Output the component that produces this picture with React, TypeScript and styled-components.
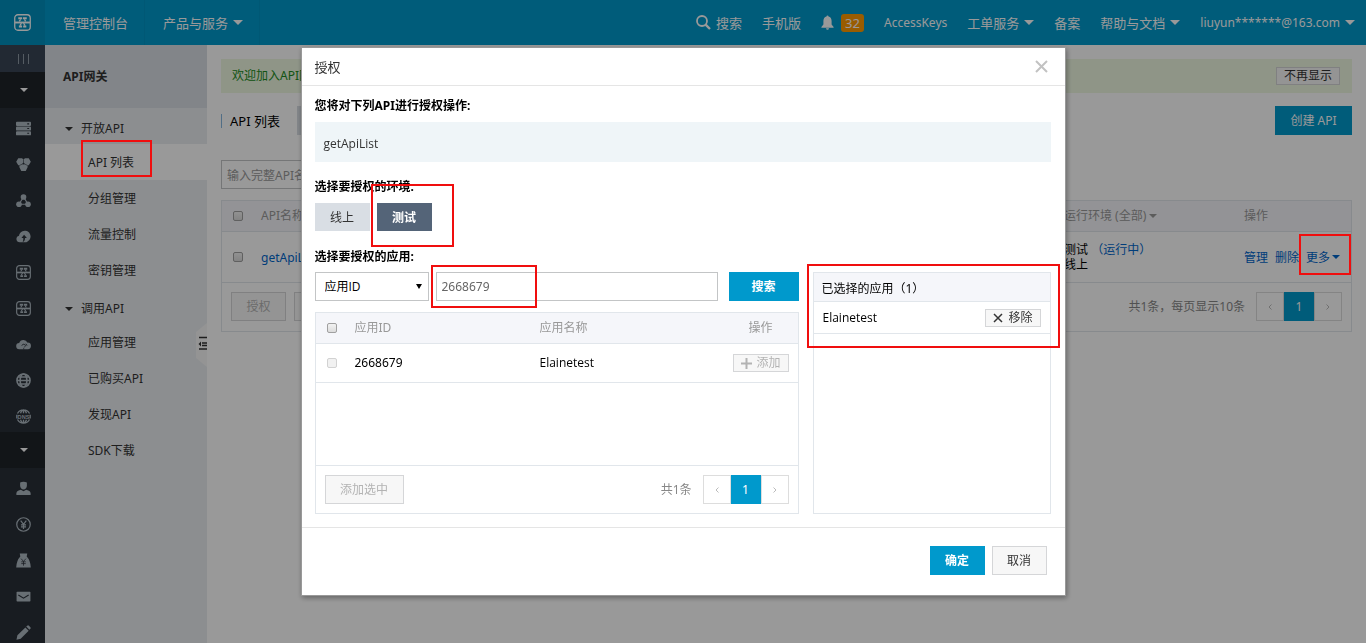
import React from "react";
import styled, { createGlobalStyle, css } from "styled-components";

const Global = createGlobalStyle`
  *, *::before, *::after { box-sizing: border-box; }
  body {
    margin: 0;
    background: #fff;
    color: #333;
    font: 12px/18px "Noto Sans", "Noto Sans CJK SC", sans-serif;
  }
  button, input, select { font: inherit; color: inherit; margin: 0; }
  button { cursor: pointer; padding: 0; }
  a { color: inherit; text-decoration: none; }
  h1, h2, p { margin: 0; font-size: inherit; }
`;

const BLUE = "#0099cc";
const NARROW = `"Open Sans", "Noto Sans CJK SC", sans-serif`;

/* ---------- shared parts ---------- */

const Caret = styled.span<{ $size?: number }>`
  display: inline-block;
  flex: none;
  border: ${(p) => p.$size ?? 4}px solid transparent;
  border-top-color: currentColor;
  border-bottom: 0;
`;

const Mark = styled.span<{ $x: number; $y: number; $w: number; $h: number }>`
  position: absolute;
  z-index: 30;
  left: ${(p) => p.$x}px;
  top: ${(p) => p.$y}px;
  width: ${(p) => p.$w}px;
  height: ${(p) => p.$h}px;
  border: 2px solid #f00e0e;
  pointer-events: none;
`;

const Name = styled.span`
  font-family: ${NARROW};
`;

const Check = styled.input.attrs({ type: "checkbox" })`
  appearance: none;
  display: block;
  width: 10px;
  height: 10px;
  border: 1px solid #a0a0a0;
  border-radius: 2px;
  background: linear-gradient(#f2f2f2, #dcdcdc);
  &:disabled { border-color: #d2d2d2; background: #f1f1f1; }
`;

const Button = styled.button<{ $kind?: "primary" | "plain"; $w?: number; $small?: boolean }>`
  display: inline-flex;
  align-items: center;
  justify-content: center;
  gap: 4px;
  flex: none;
  width: ${(p) => (p.$w ? `${p.$w}px` : "auto")};
  height: ${(p) => (p.$small ? 18 : 29)}px;
  padding: 0 ${(p) => (p.$small ? 7 : 14)}px;
  white-space: nowrap;
  ${(p) =>
    p.$kind === "primary"
      ? css`border: 0; background: ${BLUE}; color: #fff;`
      : css`border: 1px solid #d5d6d8; background: #f7f7f7; color: #333;`}
  &:disabled { color: #b3b3b3; cursor: default; }
`;

const PagerBox = styled.nav`
  display: flex;
  align-items: center;
  gap: 11px;
  color: #888;
`;
const Pages = styled.div`
  display: flex;
  height: 29px;
`;
const PageButton = styled.button<{ $current?: boolean }>`
  display: flex;
  align-items: center;
  justify-content: center;
  width: ${(p) => (p.$current ? 30 : 28)}px;
  border: 1px solid ${(p) => (p.$current ? BLUE : "#ddd")};
  background: ${(p) => (p.$current ? BLUE : "#fff")};
  color: ${(p) => (p.$current ? "#fff" : "#bbb")};
`;

const Chevron = ({ flip }: { flip?: boolean }) => (
  <svg width="4" height="6" viewBox="0 0 4 6" fill="none" stroke="currentColor">
    <path d={flip ? "M.5 .5L3 3L.5 5.5" : "M3.5 .5L1 3L3.5 5.5"} />
  </svg>
);

const Pager = ({ label }: { label: string }) => (
  <PagerBox>
    <span>{label}</span>
    <Pages>
      <PageButton aria-label="上一页"><Chevron /></PageButton>
      <PageButton $current>1</PageButton>
      <PageButton aria-label="下一页"><Chevron flip /></PageButton>
    </Pages>
  </PagerBox>
);

/* ---------- icons ---------- */

const Svg = ({ size = 15, children }: { size?: number; children: React.ReactNode }) => (
  <svg width={size} height={size} viewBox="0 0 16 16" fill="currentColor" aria-hidden="true">
    {children}
  </svg>
);

const ApiIcon = ({ size }: { size?: number }) => (
  <Svg size={size}>
    <g fill="none" stroke="currentColor">
      <rect x=".7" y=".7" width="14.6" height="14.6" rx="3" strokeWidth="1.2" />
      <path d="M4 4h3.600M8.400 4H12M4.600 11.800h3M8.600 11.800h3" strokeWidth="2" />
      <path d="M1 8h14" strokeWidth="1.800" />
      <path d="M6.200 5L5 7M9.800 5L11 7M7 8.600L5.600 11M9 8.600l1.400 2.400" strokeWidth="1.200" />
    </g>
  </Svg>
);
const ServerIcon = () => (
  <Svg>
    <path fillRule="evenodd" d="M1 .8h14a1 1 0 0 1 1 1v2.4a1 1 0 0 1-1 1H1a1 1 0 0 1-1-1V1.800a1 1 0 0 1 1-1zM12 2.400v1.200h2V2.400zM1 5.900h14a1 1 0 0 1 1 1v2.300a1 1 0 0 1-1 1H1a1 1 0 0 1-1-1V6.900a1 1 0 0 1 1-1zM12 7.400v1.200h2V7.400zM1 10.900h14a1 1 0 0 1 1 1v2.400a1 1 0 0 1-1 1H1a1 1 0 0 1-1-1v-2.400a1 1 0 0 1 1-1zM12 12.500v1.200h2v-1.200z" />
  </Svg>
);
const HexIcon = () => (
  <Svg>
    <path d="M2.400 1.200h4L8 2.600l1.600-1.400h4L15.800 5l-2.200 3.700h-1.500l.4 1.900-2.100 4.200H5.600l-2.100-4.200.4-1.900H2.400L.2 5z" />
    <path d="M8 2.600V7M8 7L4 8.800M8 7l4 1.800" fill="none" stroke="#293038" strokeWidth=".6" />
    <circle cx="8" cy="7" r="1" fill="#293038" />
  </Svg>
);
const NodesIcon = () => (
  <Svg>
    <circle cx="8" cy="4.200" r="3" />
    <circle cx="3.200" cy="12" r="3" />
    <circle cx="12.800" cy="12" r="3" />
    <path d="M8 4.200L3.200 12h9.600z" fill="none" stroke="currentColor" strokeWidth="1.200" />
  </Svg>
);
const CloudUpIcon = () => (
  <Svg>
    <path d="M4 14.200a3.600 3.600 0 0 1-.8-7.100A6.200 6.200 0 1 1 12 13.600a5 5 0 0 1-2 .6z" />
    <path d="M8.600 6.200l3 3.400H9.600c0 2.200-.8 3.800-2.600 4.600.7-1.400.9-2.800.8-4.600H5.800z" fill="#293038" />
  </Svg>
);
const CloudIcon = () => (
  <Svg>
    <path d="M3.600 13a3.300 3.300 0 0 1-.2-6.600A4.800 4.800 0 0 1 12.300 6 3.500 3.500 0 0 1 12.600 13z" />
    <path d="M6.200 9.200c.5-1.800 3.300-2 3.800-.2.200 1-.8 1.400-1.200 1.900M10.500 7.200l1.200 2M8.200 12v1.200" fill="none" stroke="#293038" />
  </Svg>
);
const GlobeIcon = () => (
  <Svg>
    <g fill="none" stroke="currentColor" strokeWidth="1.700">
      <circle cx="8" cy="8" r="7" />
      <ellipse cx="8" cy="8" rx="3.600" ry="7" />
      <path d="M1 8h14M2.600 4.200h10.800M2.600 11.800h10.800" />
    </g>
  </Svg>
);
const DnsText = styled.text`
  font: bold 6px "Liberation Sans", sans-serif;
  text-anchor: middle;
`;
const DnsIcon = () => (
  <Svg>
    <path d="M1.600 4.800a7.200 7.200 0 0 1 12.800 0M1.600 11.200a7.200 7.200 0 0 0 12.800 0M4.800 4.500Q5.600 1.600 8 .9q2.400.7 3.200 3.600M4.800 11.500q.8 2.900 3.200 3.600 2.400-.7 3.200-3.600M8 1v3.500M8 11.500V15M.9 6v4M15.100 6v4" fill="none" stroke="currentColor" strokeWidth="1.400" />
    <DnsText x="8" y="10.200">DNS</DnsText>
  </Svg>
);
const UserIcon = () => (
  <Svg>
    <path d="M4.400 1.500Q8 0 11.600 1.500v3.800Q11 9 8 9T4.400 5.300zM.4 15v-2.200q.2-1.800 2.400-2.600l2.400-.8L8 11l2.800-1.600 2.400.8q2.200.8 2.400 2.600V15z" />
  </Svg>
);
const YenIcon = () => (
  <Svg>
    <g fill="none" stroke="currentColor" strokeWidth="1.300">
      <circle cx="8" cy="8" r="7.200" />
      <path d="M5 3.800l3 4 3-4M8 7.800v5M5.300 8.300h5.400M5.300 10.500h5.400" />
    </g>
  </Svg>
);
const BagIcon = () => (
  <Svg>
    <path d="M4 .6h8l-.6 3.200q3.900 4 4.400 11.600H.2Q.7 7.800 4.600 3.800z" />
    <path d="M5.400 6L8 9l2.600-3M8 9v4.500M5.600 9.400h4.800M5.600 11.300h4.800" fill="none" stroke="#293038" strokeWidth=".8" />
  </Svg>
);
const MailIcon = () => (
  <Svg>
    <rect x=".6" y="3" width="14.800" height="10.400" rx=".8" />
    <path d="M2.500 6.500L8 9.800l5.500-3.300" fill="none" stroke="#293038" strokeWidth="1.200" />
  </Svg>
);
const PencilIcon = () => (
  <Svg>
    <path d="M.5 15.600l1-4.600L10 2.600l3.500 3.500L5 14.600zM10.900 1.700L12 .7q.9-.7 1.800.1l1.500 1.500q.8.900 0 1.800l-1 1z" />
  </Svg>
);

/* ---------- top bar ---------- */

const TopBar = styled.header`
  display: flex;
  align-items: stretch;
  height: 45px;
  background: ${BLUE};
  color: #fff;
  font-size: 13px;
`;
const Logo = styled.a`
  display: flex;
  align-items: center;
  justify-content: center;
  width: 45px;
  background: #008fbf;
`;
const NavItem = styled.a<{ $wide?: boolean; $latin?: boolean }>`
  display: flex;
  align-items: center;
  gap: 5px;
  padding: ${(p) => (p.$wide ? "0 16px 0 18px" : "0 10px")};
  font-size: ${(p) => (p.$latin ? 12 : 13)}px;
  white-space: nowrap;
  border-right: ${(p) => (p.$wide ? 1 : 0)}px solid #0093c4;
`;
const NavEnd = styled.div`
  display: flex;
  margin-left: auto;
  padding-right: 1px;
`;
const Badge = styled.span`
  margin-left: 2px;
  padding: 0 4px;
  border-radius: 3px;
  background: #ff9900;
  line-height: 18px;
`;

/* ---------- left rail and menu ---------- */

const Shell = styled.div`
  display: flex;
  flex-direction: column;
  height: 100vh;
  overflow: hidden;
`;
const Body = styled.div`
  display: flex;
  flex: 1;
  min-height: 0;
`;
const Rail = styled.nav`
  flex: none;
  width: 45px;
  overflow: hidden;
  background: #293038;
  color: #aeb9c2;
`;
const RailButton = styled.button<{ $kind: "toggle" | "fold" }>`
  display: flex;
  align-items: center;
  justify-content: center;
  width: 100%;
  height: ${(p) => (p.$kind === "toggle" ? 27 : 36)}px;
  padding-left: 2px;
  border: 0;
  background: ${(p) => (p.$kind === "toggle" ? "#394555" : "#1e2329")};
  color: ${(p) => (p.$kind === "toggle" ? "#8e99a5" : "#fff")};
`;
const RailItem = styled.a`
  display: flex;
  justify-content: center;
  align-items: center;
  height: 36px;
  padding: 4px 0 0 1px;
`;

const Side = styled.aside`
  position: relative;
  flex: none;
  width: 162px;
  background: #eaedf1;
`;
const SideTitle = styled.h1`
  padding: 0 18px;
  background: #d9dee4;
  line-height: 63px;
`;
const GroupTitle = styled.button`
  display: flex;
  align-items: center;
  gap: 8px;
  width: 100%;
  height: 36px;
  padding: 5px 20px 0;
  border: 0;
  background: none;
`;
const SideLink = styled.a<{ $active?: boolean }>`
  position: relative;
  display: block;
  padding: 2px 0 0 43px;
  line-height: 34px;
  background: ${(p) => (p.$active ? "#fff" : "none")};
`;
const Handle = styled.button`
  position: absolute;
  right: 0;
  top: 278px;
  width: 11px;
  height: 44px;
  border: 0;
  background: none;
`;

/* ---------- page ---------- */

const Main = styled.main`
  flex: 1;
  min-width: 0;
  padding: 14px 14px 0;
`;
const Notice = styled.div`
  display: flex;
  align-items: center;
  justify-content: space-between;
  height: 34px;
  padding: 0 12px 0 11px;
  background: #eef8e2;
  color: #218c21;
`;
const TitleRow = styled.div`
  display: flex;
  align-items: center;
  height: 29px;
  margin-top: 13px;
`;
const PageTitle = styled.h2`
  padding: 1px 0 0 8px;
  border-left: 1px solid #88b7e0;
  font-weight: 400;
  font-size: 13px;
  line-height: 13px;
  color: #000;
`;
const RegionTab = styled.button`
  width: 90px;
  height: 29px;
  margin: 0 auto 0 17px;
  border: 0;
  background: #d9dee4;
`;
const Filter = styled.input`
  display: block;
  width: 260px;
  height: 29px;
  margin: 25px 0 11px;
  padding: 2px 5px 0;
  border: 1px solid #c3c5c6;
  &::placeholder { color: #999; opacity: 1; }
`;
const Grid = styled.table`
  width: 100%;
  border-collapse: collapse;
  table-layout: fixed;
  th { height: 30px; background: #f5f6fa; color: #999; font-weight: 400; }
  th, td { padding: 0; text-align: left; border-bottom: 1px solid #e1e6eb; }
`;
const ApiPanel = styled.section`
  border: 1px solid #e1e6eb;
  td { height: 51px; padding-top: 1px; line-height: 15px; color: #000; }
  th:first-child, td:first-child { padding-left: 11px; }
`;
const PanelFoot = styled.footer`
  display: flex;
  align-items: center;
  gap: 8px;
  height: 48px;
  padding: 0 9px;
  & > nav { margin-left: auto; }
`;
const BlueLink = styled.a`
  color: #0066cc;
`;
const Actions = styled.div`
  position: relative;
  display: flex;
  gap: 7px;
  white-space: nowrap;
`;
const MoreLink = styled(BlueLink)`
  display: inline-flex;
  align-items: center;
  gap: 2px;
`;
const Sortable = styled.span`
  display: inline-flex;
  align-items: center;
  gap: 3px;
`;

/* ---------- dialog ---------- */

const Overlay = styled.div`
  position: fixed;
  inset: 0;
  z-index: 20;
  display: flex;
  justify-content: center;
  align-items: flex-start;
  padding-top: 47px;
  background: rgba(0, 0, 0, 0.4);
`;
const Dialog = styled.section`
  width: 765px;
  max-width: 100%;
  border: 1px solid #999;
  background: #fff;
  box-shadow: 1px 2px 5px rgba(0, 0, 0, 0.35);
  color: #000;
`;
const DialogHead = styled.header`
  display: flex;
  align-items: center;
  justify-content: space-between;
  height: 38px;
  padding: 0 17px 0 13px;
  border-bottom: 1px solid #e5e5e5;
  font-size: 13px;
  color: #333;
  h2 { font-weight: 400; }
`;
const Close = styled.button`
  display: flex;
  border: 0;
  background: none;
  color: #c2c2c2;
`;
const DialogBody = styled.div`
  padding: 11px 14px 13px 13px;
`;
const Label = styled.p`
  font-weight: 700;
  line-height: 18px;
`;
const Target = styled.div`
  margin: 7px 0 16px;
  padding: 4px 9px 0;
  background: #eff5f8;
  color: #333;
  line-height: 36px;
`;
const EnvRow = styled.div`
  position: relative;
  display: flex;
  gap: 7px;
  margin: 7px 0 17px;
`;
const EnvButton = styled.button<{ $on?: boolean }>`
  width: 55px;
  height: 28px;
  padding-top: 2px;
  border: 0;
  background: ${(p) => (p.$on ? "#546478" : "#d9dee4")};
  color: ${(p) => (p.$on ? "#fff" : "#333")};
  font-weight: ${(p) => (p.$on ? 700 : 400)};
`;
const Columns = styled.div`
  display: flex;
  gap: 14px;
  margin-top: 6px;
`;
const PickColumn = styled.div`
  flex: 1;
  min-width: 0;
`;
const SearchRow = styled.div`
  position: relative;
  display: flex;
  height: 29px;
  margin-bottom: 11px;
`;
const SelectBox = styled.label`
  position: relative;
  flex: none;
  width: 114px;
  select {
    appearance: none;
    width: 100%;
    height: 100%;
    padding: 0 9px;
    border: 1px solid #c3c5c6;
    border-radius: 0;
    background: #fff;
    font-family: ${NARROW};
  }
  span { position: absolute; right: 7px; top: 12px; border-width: 5px 3px 0; pointer-events: none; }
`;
const Keyword = styled.input`
  flex: 1;
  min-width: 0;
  margin: 0 11px 0 7px;
  padding: 0 5px;
  border: 1px solid #c3c5c6;
  color: #666;
`;
const PickPanel = styled.div`
  display: flex;
  flex-direction: column;
  height: 202px;
  border: 1px solid #e1e6eb;
  table { flex: none; }
  td { height: 39px; }
  th:first-child, td:first-child { padding-left: 11px; }
  th:last-child, td:last-child { padding-right: 9px; text-align: right; }
  td:last-child { padding-top: 3px; }
  th:last-child { padding-right: 25px; }
`;
const PickFoot = styled(PanelFoot)`
  margin-top: auto;
  border-top: 1px solid #e1e6eb;
`;
const Chosen = styled.section`
  position: relative;
  flex: none;
  width: 238px;
  border: 1px solid #e1e6eb;
`;
const ChosenHead = styled.h2`
  padding: 4px 8px 0;
  border-bottom: 1px solid #e1e6eb;
  background: #f5f6fa;
  font-weight: 400;
  line-height: 24px;
`;
const ChosenRow = styled.div`
  display: flex;
  align-items: center;
  justify-content: space-between;
  height: 32px;
  padding: 0 9px;
  border-bottom: 1px solid #e1e6eb;
`;
const DialogFoot = styled.footer`
  display: flex;
  justify-content: flex-end;
  gap: 7px;
  padding: 18px 18px 20px;
  border-top: 1px solid #e5e5e5;
`;
const Strong = styled(Button)`
  font-weight: 700;
`;

/* ---------- data ---------- */

const products = [ServerIcon, HexIcon, NodesIcon, CloudUpIcon, ApiIcon, ApiIcon, CloudIcon, GlobeIcon, DnsIcon];
const account = [UserIcon, YenIcon, BagIcon, MailIcon, PencilIcon];
const menu = [
  { title: "开放API", items: ["API 列表", "分组管理", "流量控制", "密钥管理"] },
  { title: "调用API", items: ["应用管理", "已购买API", "发现API", "SDK下载"] },
];

export default function App() {
  return (
    <>
      <Global />
      <Shell>
        <TopBar>
          <Logo href="#" aria-label="首页"><ApiIcon size={17} /></Logo>
          <NavItem href="#" $wide>管理控制台</NavItem>
          <NavItem href="#" $wide>产品与服务 <Caret $size={5} /></NavItem>
          <NavEnd>
            <NavItem href="#">
              <svg width="15" height="15" viewBox="0 0 15 15" fill="none" stroke="currentColor">
                <circle cx="6" cy="6" r="5" strokeWidth="1.800" />
                <path d="M9.600 9.600L14 14" strokeWidth="2.400" />
              </svg>
              搜索
            </NavItem>
            <NavItem href="#">手机版</NavItem>
            <NavItem href="#">
              <svg width="13" height="15" viewBox="0 0 13 15" fill="currentColor">
                <path d="M6.500.4q1 0 1 1Q10.600 2.300 10.600 6v3.600L12.600 12v.8H.4V12l2-2.400V6Q2.400 2.300 5.500 1.400q0-1 1-1zM5 13.300h3q-.2 1.500-1.500 1.500T5 13.300z" />
              </svg>
              <Badge>32</Badge>
            </NavItem>
            <NavItem href="#" $latin>AccessKeys</NavItem>
            <NavItem href="#">工单服务 <Caret $size={5} /></NavItem>
            <NavItem href="#">备案</NavItem>
            <NavItem href="#">帮助与文档 <Caret $size={5} /></NavItem>
            <NavItem href="#" $latin>liuyun*******@163.com <Caret $size={5} /></NavItem>
          </NavEnd>
        </TopBar>
        <Body>
          <Rail>
            <RailButton $kind="toggle" aria-label="展开">
              <svg width="12" height="10" viewBox="0 0 12 10" stroke="currentColor">
                <path d="M.5 0v10M5.500 0v10M10.500 0v10" />
              </svg>
            </RailButton>
            <RailButton $kind="fold" aria-label="产品"><Caret /></RailButton>
            {products.map((Icon, i) => (
              <RailItem href="#" key={i}><Icon /></RailItem>
            ))}
            <RailButton $kind="fold" aria-label="账户"><Caret /></RailButton>
            {account.map((Icon, i) => (
              <RailItem href="#" key={i}><Icon /></RailItem>
            ))}
          </Rail>
          <Side>
            <SideTitle>API网关</SideTitle>
            {menu.map((group, g) => (
              <div key={group.title}>
                <GroupTitle><Caret />{group.title}</GroupTitle>
                {group.items.map((item, i) => (
                  <SideLink href="#" key={item} $active={g === 0 && i === 0}>
                    {item}
                    {g === 0 && i === 0 && <Mark $x={36} $y={-4} $w={71} $h={37} />}
                  </SideLink>
                ))}
              </div>
            ))}
            <Handle aria-label="收起菜单">
              <svg width="11" height="44" viewBox="0 0 11 44">
                <path d="M11 0L0 9v26l11 9z" fill="#f7f7f7" />
                <path d="M3 14.500h8M6 20h5M6 22.500h5M3 26h8" stroke="#333" strokeWidth="1.500" />
                <path d="M5 18.500v5L2.500 21z" fill="#333" />
              </svg>
            </Handle>
          </Side>
          <Main>
            <Notice>
              <span>欢迎加入API网</span>
              <Button $small>不再显示</Button>
            </Notice>
            <TitleRow>
              <PageTitle>API 列表</PageTitle>
              <RegionTab aria-label="地域" />
              <Button $kind="primary" $w={77}>创建 API</Button>
            </TitleRow>
            <Filter placeholder="输入完整API名" aria-label="API名称" />
            <ApiPanel>
              <Grid>
                <colgroup>
                  <col style={{ width: 39 }} />
                  <col />
                  <col style={{ width: 180 }} />
                  <col style={{ width: 107 }} />
                </colgroup>
                <thead>
                  <tr>
                    <th><Check aria-label="全选" /></th>
                    <th>API名称</th>
                    <th><Sortable>运行环境 (全部)<Caret /></Sortable></th>
                    <th>操作</th>
                  </tr>
                </thead>
                <tbody>
                  <tr>
                    <td><Check aria-label="getApiList" /></td>
                    <td><BlueLink href="#">getApiList</BlueLink></td>
                    <td>测试 <BlueLink href="#">（运行中）</BlueLink><br />线上</td>
                    <td>
                      <Actions>
                        <BlueLink href="#">管理</BlueLink>
                        <BlueLink href="#">删除</BlueLink>
                        <MoreLink href="#">更多<Caret /></MoreLink>
                        <Mark $x={55} $y={-16} $w={52} $h={41} />
                      </Actions>
                    </td>
                  </tr>
                </tbody>
              </Grid>
              <PanelFoot>
                <Button $w={55} disabled>授权</Button>
                <Button $w={55} disabled aria-label="删除" />
                <Pager label="共1条，每页显示10条" />
              </PanelFoot>
            </ApiPanel>
          </Main>
        </Body>
      </Shell>

      <Overlay>
        <Dialog role="dialog" aria-labelledby="dialog-title">
          <DialogHead>
            <h2 id="dialog-title">授权</h2>
            <Close aria-label="关闭">
              <svg width="13" height="13" viewBox="0 0 13 13" stroke="currentColor" strokeWidth="2">
                <path d="M1 1l11 11M12 1L1 12" />
              </svg>
            </Close>
          </DialogHead>
          <DialogBody>
            <Label>您将对下列API进行授权操作:</Label>
            <Target><Name>getApiList</Name></Target>
            <Label>选择要授权的环境:</Label>
            <EnvRow>
              <EnvButton>线上</EnvButton>
              <EnvButton $on>测试</EnvButton>
              <Mark $x={56} $y={-19} $w={83} $h={63} />
            </EnvRow>
            <Label>选择要授权的应用:</Label>
            <Columns>
              <PickColumn>
                <SearchRow>
                  <SelectBox>
                    <select aria-label="搜索字段" defaultValue="id"><option value="id">应用ID</option></select>
                    <Caret />
                  </SelectBox>
                  <Keyword defaultValue="2668679" aria-label="应用ID" />
                  <Strong $kind="primary" $w={70}>搜索</Strong>
                  <Mark $x={116} $y={-7} $w={106} $h={43} />
                </SearchRow>
                <PickPanel>
                  <Grid>
                    <colgroup>
                      <col style={{ width: 39 }} />
                      <col style={{ width: 185 }} />
                      <col />
                      <col style={{ width: 80 }} />
                    </colgroup>
                    <thead>
                      <tr>
                        <th><Check aria-label="全选应用" /></th>
                        <th>应用ID</th>
                        <th>应用名称</th>
                        <th>操作</th>
                      </tr>
                    </thead>
                    <tbody>
                      <tr>
                        <td><Check disabled aria-label="Elainetest" /></td>
                        <td>2668679</td>
                        <td><Name>Elainetest</Name></td>
                        <td>
                          <Button $small disabled>
                            <svg width="11" height="11" viewBox="0 0 11 11" stroke="currentColor" strokeWidth="2">
                              <path d="M5.500 0v11M0 5.500h11" />
                            </svg>
                            添加
                          </Button>
                        </td>
                      </tr>
                    </tbody>
                  </Grid>
                  <PickFoot>
                    <Button $w={79} disabled>添加选中</Button>
                    <Pager label="共1条" />
                  </PickFoot>
                </PickPanel>
              </PickColumn>
              <Chosen>
                <ChosenHead>已选择的应用（1）</ChosenHead>
                <ChosenRow>
                  <Name>Elainetest</Name>
                  <Button $small>
                    <svg width="11" height="10" viewBox="0 0 11 10" stroke="currentColor" strokeWidth="1.500">
                      <path d="M1 1l8 8M9 1L1 9" />
                    </svg>
                    移除
                  </Button>
                </ChosenRow>
                <Mark $x={-7} $y={-9} $w={253} $h={84} />
              </Chosen>
            </Columns>
          </DialogBody>
          <DialogFoot>
            <Strong $kind="primary" $w={55}>确定</Strong>
            <Button $w={55}>取消</Button>
          </DialogFoot>
        </Dialog>
      </Overlay>
    </>
  );
}
